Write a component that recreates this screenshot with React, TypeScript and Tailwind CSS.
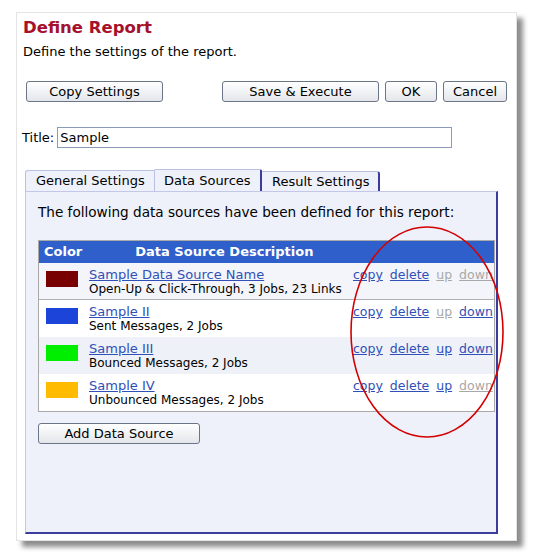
const rows = [
  { color: 'bg-[#780000]', name: 'Sample Data Source Name', desc: 'Open-Up & Click-Through, 3 Jobs, 23 Links', up: false, down: false, bg: 'bg-[#f3f5fa]' },
  { color: 'bg-[#1c44d8]', name: 'Sample II', desc: 'Sent Messages, 2 Jobs', up: false, down: true, bg: 'bg-white' },
  { color: 'bg-[#00ee00]', name: 'Sample III', desc: 'Bounced Messages, 2 Jobs', up: true, down: true, bg: 'bg-[#eef1f8]' },
  { color: 'bg-[#ffbb00]', name: 'Sample IV', desc: 'Unbounced Messages, 2 Jobs', up: true, down: false, bg: 'bg-white' },
];

const Btn = ({ label, className }: { label: string; className: string }) => (
  <button
    className={`h-[21px] rounded-[3px] border border-[#6b7588] bg-gradient-to-b from-white to-[#e4e6ea] text-[13px] leading-none text-black ${className}`}
  >
    {label}
  </button>
);

const Action = ({ label, on }: { label: string; on: boolean }) => (
  <span className={on ? 'text-[#3050b8] underline' : 'text-[#a8a8a8] underline'}>{label}</span>
);

export default function App() {
  return (
    <div className="relative h-[559px] w-[534px] bg-white font-['DejaVu_Sans',Verdana,sans-serif] text-[13px] text-black">
      <div className="pl-[16px] pt-[12px]">
        <div className="h-[529px] w-[501px] border border-[#e4e4e4] bg-white shadow-[6px_6px_5px_rgba(0,0,0,0.45)]">
          <h1 className="pl-[6px] pt-[4px] text-[16.5px] font-bold leading-[22px] text-[#a5102c]">Define Report</h1>
          <p className="pl-[6px] pt-[4px] leading-[17px]">Define the settings of the report.</p>

          <div className="flex items-center pl-[9px] pt-[21px]">
            <Btn label="Copy Settings" className="w-[137px]" />
            <Btn label="Save & Execute" className="ml-[59px] w-[157px]" />
            <Btn label="OK" className="ml-[6px] w-[52px]" />
            <Btn label="Cancel" className="ml-[6px] w-[64px]" />
          </div>

          <div className="flex items-center pl-[5px] pt-[25px]">
            <span>Title:</span>
            <div className="ml-[3px] flex h-[21px] w-[395px] items-center border border-[#8a9ab8] bg-white pl-[2px]">
              Sample
            </div>
          </div>

          <div className="pl-[8px] pt-[21px]">
            <div className="flex h-[22px] items-end">
              <div className="flex h-[21px] w-[129px] items-center rounded-tl-[3px] border-t border-l border-[#bcc0e0] bg-[#eef1f9] pl-[10px]">
                General Settings
              </div>
              <div className="flex h-[22px] w-[108px] items-center rounded-t-[2px] border-x border-t border-x-[#bcc0e0] border-r-[#3c3c9c] border-r-2 border-t-[#bcc0e0] bg-[#eef1f9] pl-[9px]">
                Data Sources
              </div>
              <div className="flex h-[20px] w-[118px] items-center rounded-tr-[3px] border-t border-r-2 border-t-[#bcc0e0] border-r-[#3c3c9c] bg-[#eef1f9] pl-[10px]">
                Result Settings
              </div>
            </div>
            <div className="h-[343px] w-[473px] border-l border-t border-r-2 border-b-2 border-l-[#c4c8e8] border-t-[#c4c8e8] border-r-[#3c3c9c] border-b-[#3c3c9c] bg-[#eef1f9] pl-[12px] pt-[11px]">
              <p className="text-[13.6px] leading-[18px]">The following data sources have been defined for this report:</p>

              <div className="mt-[19px] w-[457px] border border-[#a8a8a8]">
                <div className="flex h-[22px] items-center bg-[#2f5fcb] font-bold text-white">
                  <span className="pl-[5px]">Color</span>
                  <span className="pl-[53px]">Data Source Description</span>
                </div>
                {rows.map((r, i) => (
                  <div
                    key={r.name}
                    className={`flex h-[37px] items-start pt-[4px] ${r.bg} ${i === 0 ? 'border-b border-[#b0b0b0]' : ''}`}
                  >
                    <div className={`ml-[7px] mt-[4px] h-[16px] w-[32px] ${r.color}`} />
                    <div className="ml-[11px] flex-1 leading-[15px]">
                      <div className="text-[#3050b8] underline">{r.name}</div>
                      <div className="text-[12px]">{r.desc}</div>
                    </div>
                    <div className="flex w-[142px] gap-[7px] pl-[1px] text-[12.5px] leading-[15px]">
                      <Action label="copy" on />
                      <Action label="delete" on />
                      <Action label="up" on={r.up} />
                      <Action label="down" on={r.down} />
                    </div>
                  </div>
                ))}
              </div>

              <div className="pt-[11px]">
                <Btn label="Add Data Source" className="w-[162px]" />
              </div>
            </div>
          </div>
        </div>
      </div>

      <svg className="pointer-events-none absolute left-0 top-0" width="534" height="559">
        <ellipse cx="427" cy="332" rx="76" ry="105" fill="none" stroke="#d40000" strokeWidth="1.6" />
      </svg>
    </div>
  );
}
